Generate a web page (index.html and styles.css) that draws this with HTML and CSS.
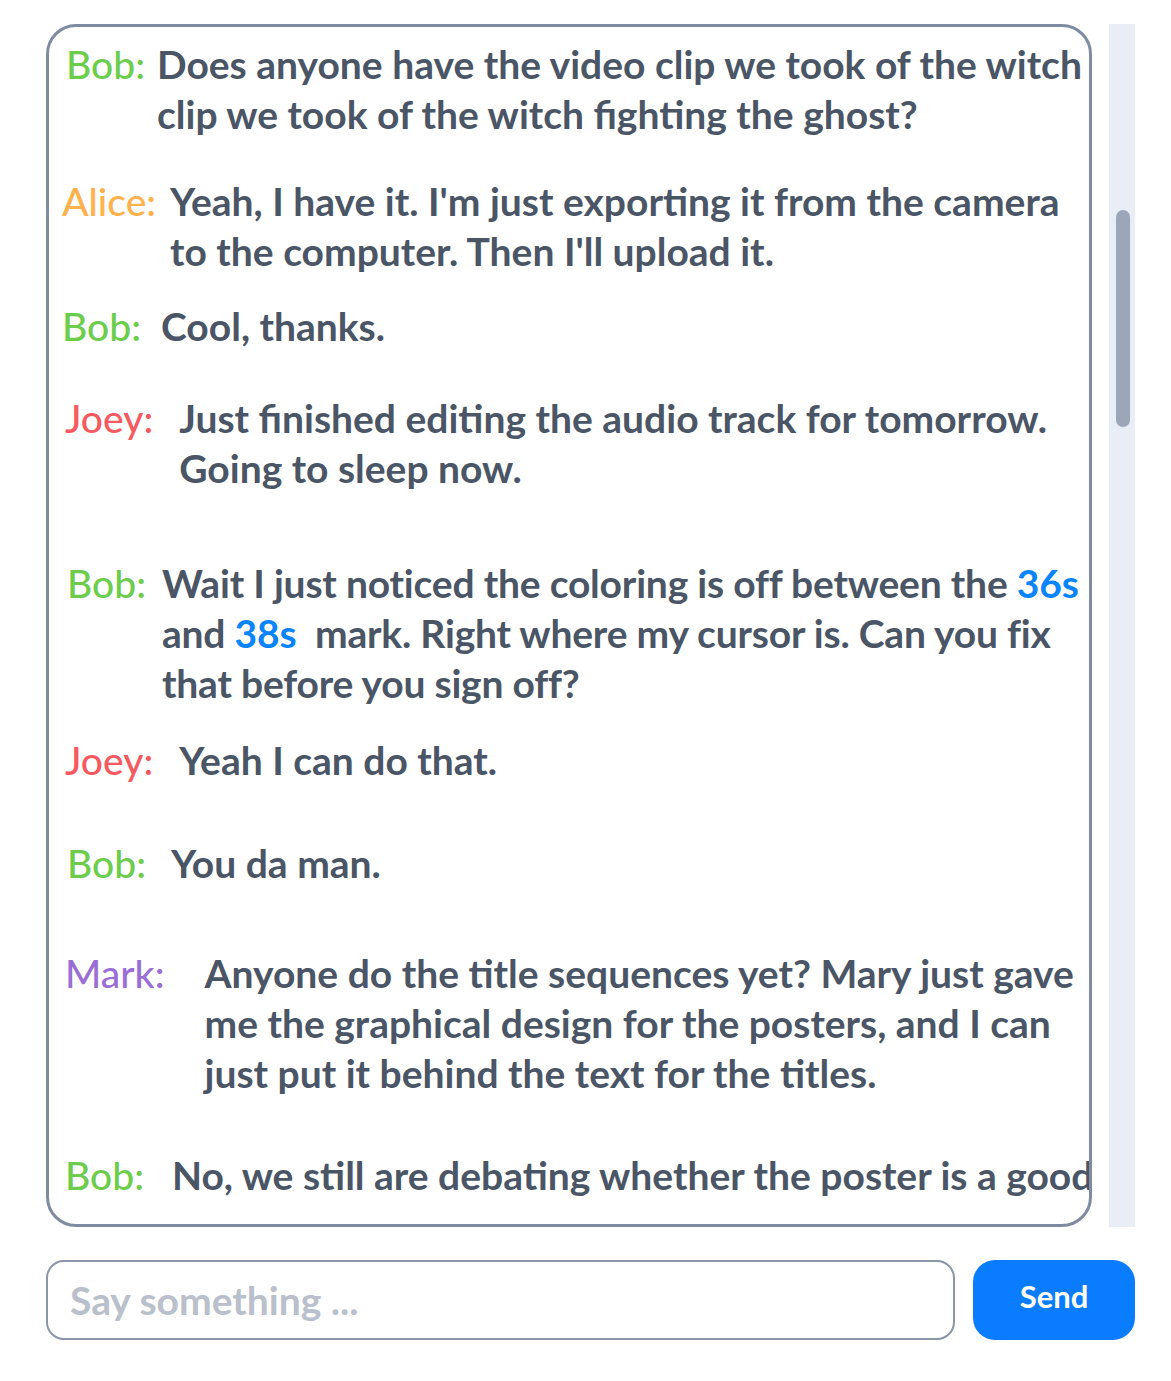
FILE: index.html
```html
<!DOCTYPE html>
<html>
<head>
<meta charset="utf-8">
<link rel="stylesheet" href="styles.css">
</head>
<body>
<div class="page">
  <div class="chat-row">
    <div class="chat-box">
      <div class="msg">
        <span class="name bob">Bob:</span>
        <p class="text">Does anyone have the video clip we took of the witch<br>clip we took of the witch fighting the ghost?</p>
      </div>
      <div class="msg">
        <span class="name alice">Alice:</span>
        <p class="text">Yeah, I have it. I'm just exporting it from the camera<br>to the computer. Then I'll upload it.</p>
      </div>
      <div class="msg">
        <span class="name bob">Bob:</span>
        <p class="text">Cool, thanks.</p>
      </div>
      <div class="msg">
        <span class="name joey">Joey:</span>
        <p class="text">Just finished editing the audio track for tomorrow.<br>Going to sleep now.</p>
      </div>
      <div class="msg">
        <span class="name bob">Bob:</span>
        <p class="text tight">Wait I just noticed the coloring is off between the <a class="stamp">36s</a><br>and <a class="stamp">38s</a> &nbsp;mark. Right where my cursor is. Can you fix<br>that before you sign off?</p>
      </div>
      <div class="msg">
        <span class="name joey">Joey:</span>
        <p class="text">Yeah I can do that.</p>
      </div>
      <div class="msg">
        <span class="name bob">Bob:</span>
        <p class="text">You da man.</p>
      </div>
      <div class="msg">
        <span class="name mark">Mark:</span>
        <p class="text">Anyone do the title sequences yet? Mary just gave<br>me the graphical design for the posters, and I can<br>just put it behind the text for the titles.</p>
      </div>
      <div class="msg">
        <span class="name bob">Bob:</span>
        <p class="text">No, we still are debating whether the poster is a good</p>
      </div>
    </div>
    <div class="scroll-track">
      <div class="scroll-thumb"></div>
    </div>
  </div>
  <div class="composer">
    <div class="input">Say something ...</div>
    <button class="send">Send</button>
  </div>
</div>
</body>
</html>
```

FILE: styles.css
```css
html, body {
  margin: 0;
  padding: 0;
  background: #ffffff;
}

.page {
  padding: 24px 0 0 46px;
  font-family: "Lato", "Liberation Sans", sans-serif;
}

.chat-row {
  display: flex;
  gap: 17px;
  align-items: stretch;
}

.chat-box {
  box-sizing: border-box;
  width: 1046px;
  height: 1203px;
  border: 3px solid #7f8ba0;
  border-radius: 30px;
  overflow: hidden;
  padding: 12px 0 0 0;
}

.msg {
  display: flex;
  align-items: flex-start;
  font-size: 39px;
  line-height: 50px;
}

.name {
  font-weight: 500;
  flex: none;
  white-space: nowrap;
}

.text {
  margin: 0;
  font-weight: 700;
  color: #4a5566;
  white-space: nowrap;
}

.tight {
  letter-spacing: -0.2px;
}

.bob { color: #6bcd4b; }
.alice { color: #ffb24d; }
.joey { color: #f65a60; }
.mark { color: #9a6fd5; }

.stamp {
  color: #0a84ff;
}

.msg:nth-child(1) { margin-top: 0; }
.msg:nth-child(1) .name { margin-left: 17px; }
.msg:nth-child(1) .text { margin-left: 12px; }

.msg:nth-child(2) { margin-top: 37px; }
.msg:nth-child(2) .name { margin-left: 13px; }
.msg:nth-child(2) .text { margin-left: 14px; }

.msg:nth-child(3) { margin-top: 25px; }
.msg:nth-child(3) .name { margin-left: 13px; }
.msg:nth-child(3) .text { margin-left: 20px; }

.msg:nth-child(4) { margin-top: 42px; }
.msg:nth-child(4) .name { margin-left: 16px; }
.msg:nth-child(4) .text { margin-left: 26px; }

.msg:nth-child(5) { margin-top: 65px; }
.msg:nth-child(5) .name { margin-left: 18px; }
.msg:nth-child(5) .text { margin-left: 16px; }

.msg:nth-child(6) { margin-top: 27px; }
.msg:nth-child(6) .name { margin-left: 16px; }
.msg:nth-child(6) .text { margin-left: 26px; }

.msg:nth-child(7) { margin-top: 53px; }
.msg:nth-child(7) .name { margin-left: 18px; }
.msg:nth-child(7) .text { margin-left: 25px; }

.msg:nth-child(8) { margin-top: 60px; }
.msg:nth-child(8) .name { margin-left: 16px; }
.msg:nth-child(8) .text { margin-left: 40px; }

.msg:nth-child(9) { margin-top: 52px; }
.msg:nth-child(9) .name { margin-left: 16px; }
.msg:nth-child(9) .text { margin-left: 28px; }

.scroll-track {
  width: 26px;
  background: #e9edf5;
  padding: 186px 0 0 7px;
  box-sizing: border-box;
}

.scroll-thumb {
  width: 14px;
  height: 217px;
  border-radius: 7px;
  background: #9ba7b8;
}

.composer {
  display: flex;
  gap: 18px;
  margin-top: 33px;
  width: 1089px;
}

.input {
  box-sizing: border-box;
  width: 909px;
  height: 80px;
  border: 2px solid #8c96a8;
  border-radius: 18px;
  padding: 0 0 0 22px;
  display: flex;
  align-items: center;
  font-size: 39px;
  font-weight: 700;
  color: #b9c0cb;
}

.send {
  width: 162px;
  height: 80px;
  border: none;
  border-radius: 22px;
  background: #0a7cff;
  color: #ffffff;
  font-family: "Lato", "Liberation Sans", sans-serif;
  font-size: 31px;
  font-weight: 700;
  padding: 0 0 8px 0;
}
```
